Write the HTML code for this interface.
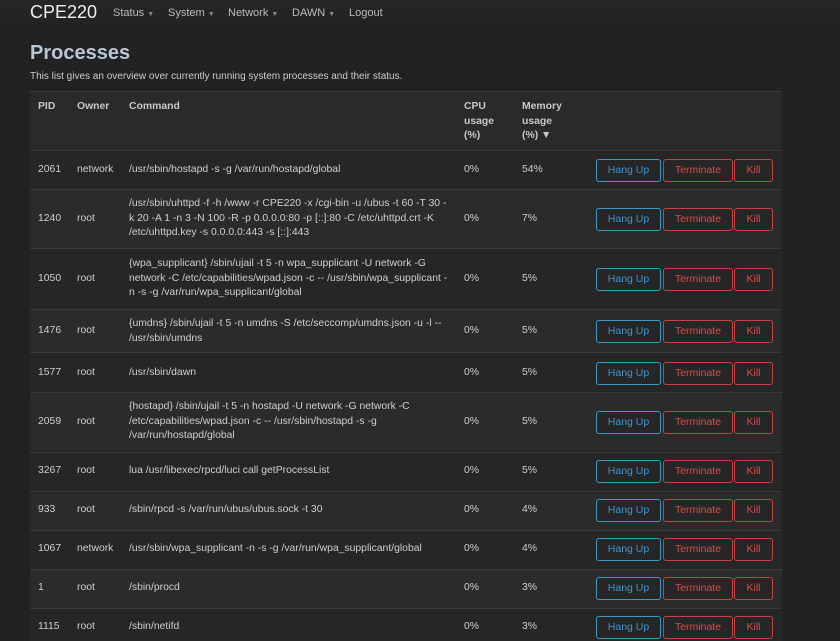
<!DOCTYPE html>
<html><head><meta charset="utf-8"><style>
*{margin:0;padding:0;box-sizing:border-box}
html,body{width:840px;height:641px;overflow:hidden}
body{background:#222;font-family:"Liberation Sans",Arial,sans-serif;color:#ccc;font-size:10px;position:relative}
.nav{position:absolute;left:0;top:0;width:840px;height:28px;background:linear-gradient(#262626,#222)}
.brand{position:absolute;left:30px;top:2px;font-size:18px;color:#eee}
.menu{position:absolute;top:7px;font-size:11px;color:#bbb}
.menu i{font-style:normal;font-size:7px;color:#888;margin-left:3px}
h1{position:absolute;left:30px;top:42px;font-size:20px;font-weight:bold;color:#b9c6d3}
.desc{position:absolute;left:30px;top:71px;font-size:10px;color:#ccc}
.row{position:absolute;left:30px;width:752px;border-top:1px solid #3a3a3a}
.c{position:absolute;line-height:14.6px;font-size:10.4px;color:#cfcfcf;white-space:nowrap}
.hd .c{font-weight:bold;color:#c8c8c8}
.b{position:absolute;height:23px;border:1px solid;border-radius:3px;font-size:10.5px;text-align:center;line-height:21px;background:#262626}
.h{width:65px;left:566px;border-color:#3b9ac4;color:#3f95cc}
.t{width:70px;left:633px;border-color:#c24543;color:#d84c48}
.k{width:39px;left:704px;border-color:#c24543;color:#d84c48}
</style></head><body>
<div class="nav">
<div class="brand">CPE220</div>
<div class="menu" style="left:113px">Status<i>▼</i></div>
<div class="menu" style="left:168px">System<i>▼</i></div>
<div class="menu" style="left:228px">Network<i>▼</i></div>
<div class="menu" style="left:292px">DAWN<i>▼</i></div>
<div class="menu" style="left:349px">Logout</div>
</div>
<h1>Processes</h1>
<div class="desc">This list gives an overview over currently running system processes and their status.</div>

<div class="row hd" style="top:91px;height:59px;background:#2a2a2a">
<div class="c" style="left:8px;top:8px">PID</div>
<div class="c" style="left:47px;top:8px">Owner</div>
<div class="c" style="left:99px;top:8px">Command</div>
<div class="c" style="left:434px;top:8px">CPU<br>usage<br>(%)</div>
<div class="c" style="left:492px;top:8px">Memory<br>usage<br>(%) ▼</div>
</div>

<div class="row" style="top:150px;height:39px;background:#262626">
<div class="c" style="left:8px;top:12px">2061</div><div class="c" style="left:47px;top:12px">network</div>
<div class="c" style="left:99px;top:12px">/usr/sbin/hostapd -s -g /var/run/hostapd/global</div>
<div class="c" style="left:434px;top:12px">0%</div><div class="c" style="left:492px;top:12px">54%</div>
<div class="b h" style="top:8px">Hang Up</div><div class="b t" style="top:8px">Terminate</div><div class="b k" style="top:8px">Kill</div>
</div>

<div class="row" style="top:189px;height:59px;background:#2b2b2b">
<div class="c" style="left:8px;top:22px">1240</div><div class="c" style="left:47px;top:22px">root</div>
<div class="c" style="left:99px;top:7px">/usr/sbin/uhttpd -f -h /www -r CPE220 -x /cgi-bin -u /ubus -t 60 -T 30 -<br>k 20 -A 1 -n 3 -N 100 -R -p 0.0.0.0:80 -p [::]:80 -C /etc/uhttpd.crt -K<br>/etc/uhttpd.key -s 0.0.0.0:443 -s [::]:443</div>
<div class="c" style="left:434px;top:22px">0%</div><div class="c" style="left:492px;top:22px">7%</div>
<div class="b h" style="top:18px">Hang Up</div><div class="b t" style="top:18px">Terminate</div><div class="b k" style="top:18px">Kill</div>
</div>

<div class="row" style="top:248px;height:61px;background:#262626">
<div class="c" style="left:8px;top:23px">1050</div><div class="c" style="left:47px;top:23px">root</div>
<div class="c" style="left:99px;top:8px">{wpa_supplicant} /sbin/ujail -t 5 -n wpa_supplicant -U network -G<br>network -C /etc/capabilities/wpad.json -c -- /usr/sbin/wpa_supplicant -<br>n -s -g /var/run/wpa_supplicant/global</div>
<div class="c" style="left:434px;top:23px">0%</div><div class="c" style="left:492px;top:23px">5%</div>
<div class="b h" style="top:19px">Hang Up</div><div class="b t" style="top:19px">Terminate</div><div class="b k" style="top:19px">Kill</div>
</div>

<div class="row" style="top:309px;height:43px;background:#2b2b2b">
<div class="c" style="left:8px;top:14px">1476</div><div class="c" style="left:47px;top:14px">root</div>
<div class="c" style="left:99px;top:7px">{umdns} /sbin/ujail -t 5 -n umdns -S /etc/seccomp/umdns.json -u -l --<br>/usr/sbin/umdns</div>
<div class="c" style="left:434px;top:14px">0%</div><div class="c" style="left:492px;top:14px">5%</div>
<div class="b h" style="top:10px">Hang Up</div><div class="b t" style="top:10px">Terminate</div><div class="b k" style="top:10px">Kill</div>
</div>

<div class="row" style="top:352px;height:40px;background:#262626">
<div class="c" style="left:8px;top:13px">1577</div><div class="c" style="left:47px;top:13px">root</div>
<div class="c" style="left:99px;top:13px">/usr/sbin/dawn</div>
<div class="c" style="left:434px;top:13px">0%</div><div class="c" style="left:492px;top:13px">5%</div>
<div class="b h" style="top:9px">Hang Up</div><div class="b t" style="top:9px">Terminate</div><div class="b k" style="top:9px">Kill</div>
</div>

<div class="row" style="top:392px;height:60px;background:#2b2b2b">
<div class="c" style="left:8px;top:22px">2059</div><div class="c" style="left:47px;top:22px">root</div>
<div class="c" style="left:99px;top:7px">{hostapd} /sbin/ujail -t 5 -n hostapd -U network -G network -C<br>/etc/capabilities/wpad.json -c -- /usr/sbin/hostapd -s -g<br>/var/run/hostapd/global</div>
<div class="c" style="left:434px;top:22px">0%</div><div class="c" style="left:492px;top:22px">5%</div>
<div class="b h" style="top:18px">Hang Up</div><div class="b t" style="top:18px">Terminate</div><div class="b k" style="top:18px">Kill</div>
</div>

<div class="row" style="top:452px;height:39px;background:#262626">
<div class="c" style="left:8px;top:11px">3267</div><div class="c" style="left:47px;top:11px">root</div>
<div class="c" style="left:99px;top:11px">lua /usr/libexec/rpcd/luci call getProcessList</div>
<div class="c" style="left:434px;top:11px">0%</div><div class="c" style="left:492px;top:11px">5%</div>
<div class="b h" style="top:7px">Hang Up</div><div class="b t" style="top:7px">Terminate</div><div class="b k" style="top:7px">Kill</div>
</div>

<div class="row" style="top:491px;height:39px;background:#2b2b2b">
<div class="c" style="left:8px;top:11px">933</div><div class="c" style="left:47px;top:11px">root</div>
<div class="c" style="left:99px;top:11px">/sbin/rpcd -s /var/run/ubus/ubus.sock -t 30</div>
<div class="c" style="left:434px;top:11px">0%</div><div class="c" style="left:492px;top:11px">4%</div>
<div class="b h" style="top:7px">Hang Up</div><div class="b t" style="top:7px">Terminate</div><div class="b k" style="top:7px">Kill</div>
</div>

<div class="row" style="top:530px;height:39px;background:#262626">
<div class="c" style="left:8px;top:11px">1067</div><div class="c" style="left:47px;top:11px">network</div>
<div class="c" style="left:99px;top:11px">/usr/sbin/wpa_supplicant -n -s -g /var/run/wpa_supplicant/global</div>
<div class="c" style="left:434px;top:11px">0%</div><div class="c" style="left:492px;top:11px">4%</div>
<div class="b h" style="top:7px">Hang Up</div><div class="b t" style="top:7px">Terminate</div><div class="b k" style="top:7px">Kill</div>
</div>

<div class="row" style="top:569px;height:39px;background:#2b2b2b">
<div class="c" style="left:8px;top:11px">1</div><div class="c" style="left:47px;top:11px">root</div>
<div class="c" style="left:99px;top:11px">/sbin/procd</div>
<div class="c" style="left:434px;top:11px">0%</div><div class="c" style="left:492px;top:11px">3%</div>
<div class="b h" style="top:7px">Hang Up</div><div class="b t" style="top:7px">Terminate</div><div class="b k" style="top:7px">Kill</div>
</div>

<div class="row" style="top:608px;height:40px;background:#262626">
<div class="c" style="left:8px;top:11px">1115</div><div class="c" style="left:47px;top:11px">root</div>
<div class="c" style="left:99px;top:11px">/sbin/netifd</div>
<div class="c" style="left:434px;top:11px">0%</div><div class="c" style="left:492px;top:11px">3%</div>
<div class="b h" style="top:7px">Hang Up</div><div class="b t" style="top:7px">Terminate</div><div class="b k" style="top:7px">Kill</div>
</div>
</body></html>
